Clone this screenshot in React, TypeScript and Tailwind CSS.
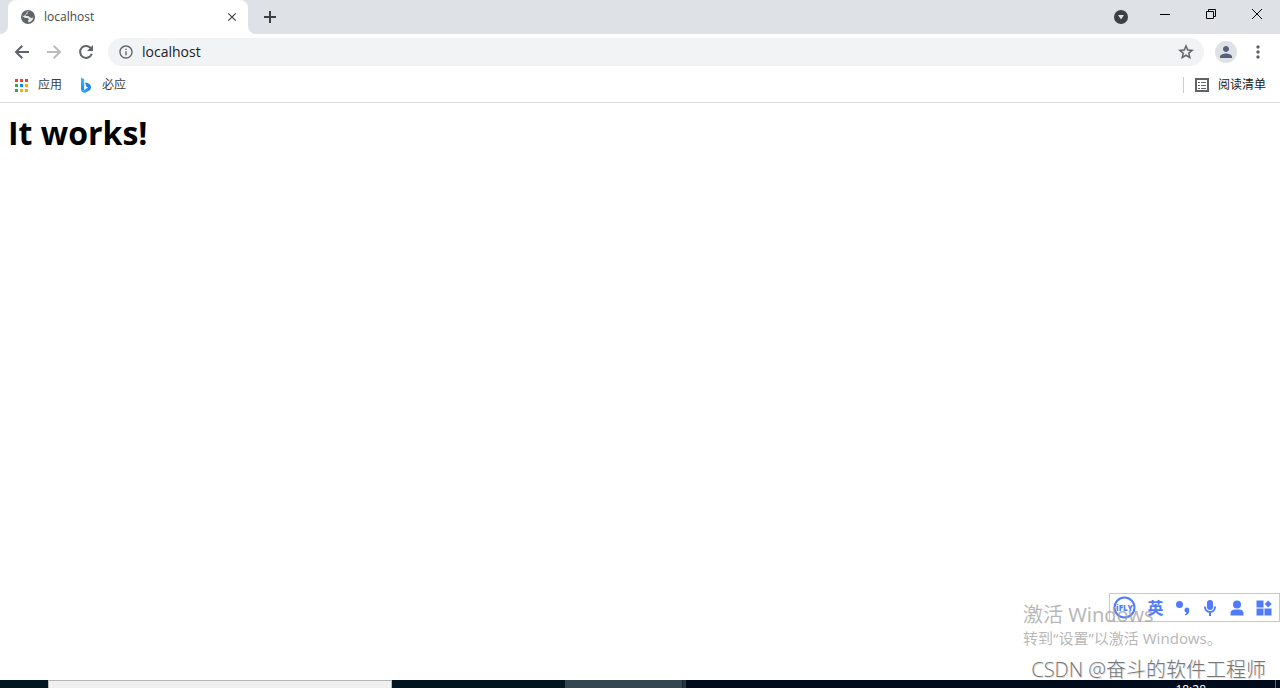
import type { ReactNode } from "react";
import {
  MdClose,
  MdInfoOutline,
  MdMoreVert,
  MdPerson,
  MdStarOutline,
} from "react-icons/md";

type IconButtonProps = {
  label: string;
  className?: string;
  children: ReactNode;
};

function IconButton({ label, className = "", children }: IconButtonProps) {
  return (
    <button
      aria-label={label}
      className={`flex shrink-0 items-center justify-center ${className}`}
      type="button"
    >
      {children}
    </button>
  );
}

function TabCurve({ flip = false }: { flip?: boolean }) {
  return (
    <svg
      aria-hidden="true"
      className={`size-2 shrink-0 self-end text-white ${flip ? "-scale-x-100" : ""}`}
      viewBox="0 0 8 8"
    >
      <path d="M8 0v8H0a8 8 0 0 0 8-8z" fill="currentColor" />
    </svg>
  );
}

function TabStrip() {
  return (
    <header className="flex h-[34px] shrink-0 items-start bg-[#dee1e6]">
      <div className="flex h-full">
        <TabCurve />
        <div className="flex h-full w-60 items-center rounded-t-lg bg-white pl-3 pr-2">
          <svg aria-hidden="true" className="size-4" viewBox="0 0 16 16">
            <circle cx="8" cy="8" fill="#5f6368" r="7" />
            <path
              d="M9 2.500C7.500 3 7 4 7.500 5L6 5.500 5.500 7H8.500L10 8.500 12 9 13.300 8.200C13.300 10.500 11.500 13 8.500 13.400L8 11.500 9 10 7.500 9H5L2.600 7.300C2.700 8 2.600 9.500 3.500 11L5.500 12 6.500 13.200C4 12.600 2.600 10.500 2.600 8C2.600 5 5 2.500 9 2.500z"
              fill="#ffffff"
              fillOpacity="0.85"
            />
            <path d="M2.800 4.500L5.500 2.400 7 3.500 6 5 4.500 6.500 3 7z" fill="#5f6368" />
            <path d="M3 9.500l2.500 1 1.500 1.500-.5 1.800-2.500-1.500z" fill="#5f6368" />
          </svg>
          <span className="ml-2 flex-1 truncate text-xs text-[#45494d]">
            localhost
          </span>
          <IconButton className="size-4 text-[#3c4043]" label="关闭标签页">
            <MdClose size={14} stroke="currentColor" />
          </IconButton>
        </div>
        <TabCurve flip />
      </div>
      <IconButton className="h-[34px] w-7 text-[#3c4043]" label="打开新的标签页">
        <svg className="size-3" fill="none" stroke="currentColor" strokeWidth="2" viewBox="0 0 12 12">
          <path d="M6 0v12M0 6h12" />
        </svg>
      </IconButton>
      <div className="ml-auto flex text-black">
        <IconButton className="h-[34px] w-[42px]" label="搜索标签页">
          <svg className="size-3.5" viewBox="0 0 14 14">
            <circle cx="7" cy="7" fill="#3c4043" r="7" />
            <path d="M4 5h6L7 9.500z" fill="#dee1e6" />
          </svg>
        </IconButton>
        <IconButton className="h-7 w-[46px]" label="最小化">
          <svg className="size-2.5" stroke="currentColor" viewBox="0 0 10 10">
            <path d="M0 5.500h10" />
          </svg>
        </IconButton>
        <IconButton className="h-7 w-[46px]" label="还原">
          <svg className="size-2.5" fill="none" stroke="currentColor" viewBox="0 0 10 10">
            <path d="M.5 2.500h7v7h-7zM2.500 2.500v-2h7v7h-2" />
          </svg>
        </IconButton>
        <IconButton className="h-7 w-[46px]" label="关闭">
          <svg className="size-2.5" fill="none" stroke="currentColor" viewBox="0 0 10 10">
            <path d="M0 0l10 10M10 0L0 10" />
          </svg>
        </IconButton>
      </div>
    </header>
  );
}

function Toolbar() {
  return (
    <div className="flex h-9 shrink-0 items-center pl-1.5 pr-[11px] text-[#5f6368]">
      <IconButton className="size-8" label="后退">
        <svg className="size-4" fill="none" stroke="currentColor" strokeWidth="2" viewBox="0 0 16 16">
          <path d="M15 8H2.500M8.300 1.700L2 8l6.300 6.300" />
        </svg>
      </IconButton>
      <IconButton className="size-8 text-[#babcbe]" label="前进">
        <svg className="size-4" fill="none" stroke="currentColor" strokeWidth="2" viewBox="0 0 16 16">
          <path d="M1 8h12.500M7.700 1.700L14 8l-6.300 6.300" />
        </svg>
      </IconButton>
      <IconButton className="size-8" label="重新加载">
        <svg className="size-4" fill="none" stroke="currentColor" strokeWidth="2" viewBox="0 0 16 16">
          <path d="M13.200 4.700A6 6 0 1 0 13.800 9.800" />
          <path d="M15 1v6H9z" fill="currentColor" stroke="none" />
        </svg>
      </IconButton>
      <label className="ml-1.5 flex h-7 flex-1 items-center rounded-full bg-[#f1f3f4] pl-2.5 pr-2">
        <MdInfoOutline aria-hidden="true" className="size-4 shrink-0" />
        <span className="sr-only">地址</span>
        <input
          className="ml-2 min-w-0 flex-1 bg-transparent text-sm text-[#202124] outline-none"
          defaultValue="localhost"
          type="text"
        />
        <IconButton className="size-5" label="为此标签页添加书签">
          <MdStarOutline size={18} stroke="currentColor" strokeWidth={0.5} />
        </IconButton>
      </label>
      <IconButton
        className="ml-[11px] size-[22px] rounded-full bg-[#dee1e6] text-[#56607a]"
        label="用户"
      >
        <MdPerson size={18} />
      </IconButton>
      <IconButton className="ml-2.5 size-[22px]" label="菜单">
        <MdMoreVert size={20} />
      </IconButton>
    </div>
  );
}

const appDots = [
  "#ea4335", "#ea4335", "#ea4335",
  "#34a853", "#1a82f7", "#fbab04",
  "#34a853", "#fbab04", "#fbab04",
];

function BookmarksBar() {
  return (
    <nav className="flex h-[33px] shrink-0 items-center border-b border-[#d9dbde] pb-0.5 pl-[15px] pr-3.5 text-xs text-[#3c4043]">
      <a className="flex items-center" href="#apps">
        <svg aria-hidden="true" className="size-[13px]" viewBox="0 0 13 13">
          {appDots.map((fill, index) => (
            <rect
              fill={fill}
              height="3"
              key={index}
              width="3"
              x={(index % 3) * 5}
              y={Math.floor(index / 3) * 5}
            />
          ))}
        </svg>
        <span className="ml-2.5">应用</span>
      </a>
      <a className="ml-4 flex items-center" href="#bing">
        <svg aria-hidden="true" className="size-4" viewBox="0 0 16 16">
          <defs>
            <linearGradient id="bing-stem" x1="0" x2="0" y1="0" y2="1">
              <stop offset="0" stopColor="#37bdff" />
              <stop offset="1" stopColor="#2385e8" />
            </linearGradient>
            <linearGradient id="bing-tail" x1="0" x2="1" y1="1" y2="0">
              <stop offset="0" stopColor="#2bb8f5" />
              <stop offset="1" stopColor="#2266ee" />
            </linearGradient>
          </defs>
          <path d="M3 .5l2.500 1.200c.4.200.7.600.7 1.200v9.500L4.500 14C3.600 13.800 3 13 3 12z" fill="url(#bing-stem)" />
          <path d="M3 12.500c.8 1.200 2 1.200 3.200.5L10 10.500 8.300 9.500 7.200 6.300c-.2-.6.200-.9.800-.7 3 1 5 2.200 5 5 0 1.200-.6 2.200-1.500 2.800l-3.700 2C5.500 16.300 3 15 3 12.500z" fill="url(#bing-tail)" />
        </svg>
        <span className="ml-2">必应</span>
      </a>
      <button
        className="ml-auto flex h-4 items-center border-l border-[#cbcdd1] pl-2.5 text-[#202124]"
        type="button"
      >
        <svg
          aria-hidden="true"
          className="size-4 text-[#5f6368]"
          fill="none"
          stroke="currentColor"
          viewBox="0 0 16 16"
        >
          <rect height="12" strokeWidth="2" width="12" x="2" y="2" />
          <path d="M4 5.500h2M7 5.500h5M4 8.500h2M7 8.500h5M4 11.500h2M7 11.500h5" />
        </svg>
        <span className="ml-2">阅读清单</span>
      </button>
    </nav>
  );
}

function InputMethodBar() {
  return (
    <div className="absolute bottom-[58px] right-0 flex h-[29px] w-[171px] items-center border border-[#c8c8c8] bg-white pl-[3px] text-[#4f7cff]">
      <IconButton className="mr-1.5" label="iFLY">
        <svg className="size-[23px]" viewBox="0 0 23 23">
          <circle cx="11.500" cy="11.500" fill="none" r="10" stroke="currentColor" strokeWidth="2" />
          <text
            className="text-[8px] font-black"
            fill="currentColor"
            textAnchor="middle"
            x="11.500"
            y="14.500"
          >
            iFLY
          </text>
        </svg>
      </IconButton>
      <button className="w-[27px] text-base leading-4 font-bold" type="button">
        英
      </button>
      <IconButton className="w-[27px]" label="中英文标点">
        <svg className="size-4" fill="currentColor" viewBox="0 0 16 16">
          <circle cx="4.500" cy="4.500" r="3.500" />
          <path d="M11.500 7.500a2.700 2.700 0 0 1 2.800 2.800c0 2.800-1.500 4.600-3.800 5.200l-.6-1.200c1-.4 1.600-.9 1.800-1.500a2.700 2.700 0 0 1-.2-5.300z" />
        </svg>
      </IconButton>
      <IconButton className="w-[27px]" label="语音">
        <svg className="size-4" fill="none" stroke="currentColor" strokeWidth="2" viewBox="0 0 16 16">
          <rect fill="currentColor" height="10" rx="3" stroke="none" width="6" x="5" y="0" />
          <path d="M3 6.500V7a5 5 0 0 0 10 0v-.5M8 12v4" />
        </svg>
      </IconButton>
      <IconButton className="w-[27px]" label="账户">
        <svg className="size-4" fill="currentColor" viewBox="0 0 16 16">
          <circle cx="8" cy="4.500" r="4" />
          <path d="M1.500 15.500v-2c0-3 2-4 4-4h5c2 0 4 1 4 4v2z" />
        </svg>
      </IconButton>
      <IconButton className="w-[27px]" label="工具箱">
        <svg className="size-4" fill="currentColor" viewBox="0 0 16 16">
          <path d="M.5 .5h7v7h-7zM.5 8.500h7v7h-7zM8.500 8.500h7v7h-7zM12.200 .5l3.500 3.500-3.500 3.500L8.700 4z" />
        </svg>
      </IconButton>
    </div>
  );
}

function ActivationNotice() {
  return (
    <div className="pointer-events-none absolute bottom-8 right-0 w-[257px] font-['Noto_Sans','Noto_Sans_CJK_SC',sans-serif] text-[#a0a0a0]/75">
      <p className="text-xl leading-[26px]">激活 Windows</p>
      <p className="text-[15px] leading-5">转到“设置”以激活 Windows。</p>
    </div>
  );
}

function Taskbar() {
  return (
    <footer className="flex h-2 shrink-0 overflow-hidden bg-[#000c1c]">
      <div className="w-12 bg-[#001721]" />
      <div className="w-[344px] border border-b-0 border-[#b5b5b5] bg-[#f0f0f0]" />
      <div className="w-[173px] bg-[#001520]" />
      <div className="w-[117px] bg-[#334650]" />
      <div className="w-1 border-l border-[#14242e] bg-[#26343f]" />
      <time className="ml-auto mr-[69px] text-xs leading-5 text-white">18:28</time>
      <div className="w-[5px] border-l border-[#5d6670]" />
    </footer>
  );
}

export default function App() {
  return (
    <div className="flex h-screen flex-col overflow-hidden bg-white font-['Open_Sans','Noto_Sans_CJK_SC',sans-serif]">
      <TabStrip />
      <Toolbar />
      <BookmarksBar />
      <main className="relative flex-1 px-2 pt-2">
        <h1 className="text-[32px] leading-[44px] font-bold text-black">
          It works!
        </h1>
        <InputMethodBar />
        <ActivationNotice />
        <p className="pointer-events-none absolute -bottom-1 right-3.5 text-xl leading-7 font-light text-[#777777] [text-shadow:1px_1px_0_#dddddd]">
          CSDN @奋斗的软件工程师
        </p>
      </main>
      <Taskbar />
    </div>
  );
}
